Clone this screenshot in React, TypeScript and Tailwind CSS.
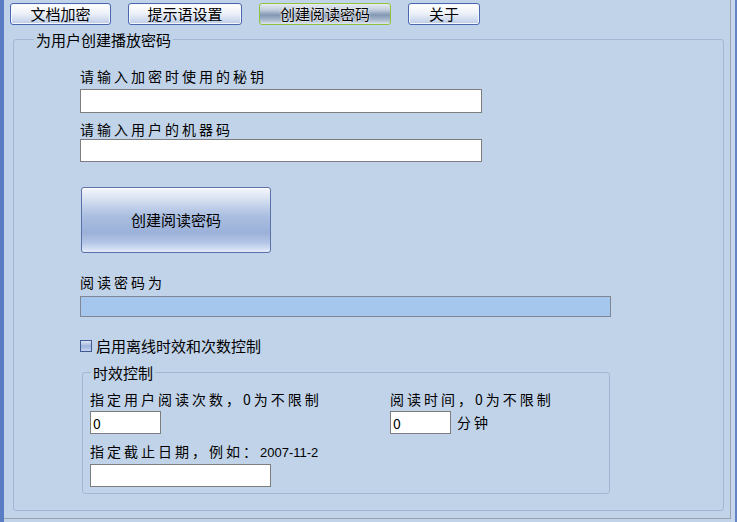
import React from "react";

const cjk = "font-['Noto_Sans_CJK_SC','Noto_Sans',sans-serif]";

type TabProps = {
  label: string;
  className: string;
  active?: boolean;
};

const TabButton = ({ label, className, active }: TabProps) => {
  return (
    <button
      className={
        active
          ? `h-[22px] rounded-[3px] border border-[#8fc33f] bg-[linear-gradient(#e6ecf2,#c2cddc_30%,#8397b3_55%,#a9b8cc_80%,#dfe7f0)] text-[15px] leading-[20px] text-black [text-shadow:0_0_2px_#fff,0_0_2px_#fff] ${className}`
          : `h-[22px] rounded-[3px] border border-[#4a66b0] bg-[linear-gradient(#ffffff,#eef2f9_45%,#cfdaee_80%,#bccbe6)] text-[15px] leading-[20px] text-black shadow-[inset_0_0_0_1px_#f4f7fc] ${className}`
      }
    >
      {label}
    </button>
  );
};

const App = () => {
  return (
    <div className={`flex h-[522px] w-[737px] overflow-hidden bg-[#c1d3e9] text-black ${cjk}`}>
      <div className="w-[4px] bg-[#5a7cc3]" />
      <div className="flex w-[727px] flex-col">
        <div className="flex h-[519px] flex-col border-r border-b border-[#9aa3ae]">
          {/* tabs */}
          <div className="flex gap-[17px] pl-[6px] pt-[3px]">
            <TabButton label="文档加密" className="w-[101px]" />
            <TabButton label="提示语设置" className="w-[114px]" />
            <TabButton label="创建阅读密码" className="w-[132px]" active />
            <TabButton label="关于" className="w-[72px]" />
          </div>

          <fieldset className="mb-[7px] ml-[9px] mt-[6px] w-[711px] flex-1 rounded-[3px] border border-[#a3b6d4]">
            <legend className="ml-[20px] px-[2px] text-[15px] leading-[17px]">为用户创建播放密码</legend>

            <div className="flex flex-col pl-[66px]">
              <label className="mt-[20px] text-[14px] leading-[17px] tracking-[3px]">请输入加密时使用的秘钥</label>
              <input className="mt-[4px] h-[24px] w-[402px] border border-[#7d7d7d] bg-white px-[2px] text-[14px] outline-none" />

              <label className="mt-[8px] text-[14px] leading-[17px] tracking-[3px]">请输入用户的机器码</label>
              <input className="mt-[1px] h-[23px] w-[402px] border border-[#7d7d7d] bg-white px-[2px] text-[14px] outline-none" />

              <button className="ml-[1px] mt-[25px] h-[66px] w-[190px] rounded-[3px] border border-[#5c70a9] bg-[linear-gradient(#f4f7fc,#dbe4f3_15%,#c0cfe9_30%,#a9bde0_45%,#9cb1d9_70%,#b3c5e6_85%,#e2ebf9)] text-[15px] leading-[20px] shadow-[inset_0_1px_0_#ffffff,inset_0_-2px_0_#dfe8f8]">
                创建阅读密码
              </button>

              <label className="mt-[21px] text-[14px] leading-[17px] tracking-[3px]">阅读密码为</label>
              <input
                readOnly
                className="mt-[5px] h-[21px] w-[531px] border border-[#7f8794] bg-[#a5c7ee] px-[2px] text-[14px] outline-none"
              />

              <label className="mt-[20px] flex h-[17px] items-center gap-[4px] text-[15px] leading-[17px]">
                <span className="h-[12px] w-[12px] border border-[#3f5a92] bg-[linear-gradient(#dfe7f5,#9fb4dc_50%,#c5d4ee)]" />
                启用离线时效和次数控制
              </label>

              <fieldset className="ml-[2px] mt-[10px] w-[528px] rounded-[3px] border border-[#a3b6d4] pb-[6px]">
                <legend className="ml-[8px] px-[2px] text-[15px] leading-[17px]">时效控制</legend>

                <div className="grid grid-cols-[300px_1fr] pl-[7px]">
                  <div className="flex flex-col">
                    <label className="mt-[10px] text-[14px] leading-[17px] tracking-[3px]">
                      指定用户阅读次数，0为不限制
                    </label>
                    <input
                      defaultValue="0"
                      className="mt-[3px] h-[23px] w-[71px] border border-[#7d7d7d] bg-white px-[2px] text-[14px] outline-none"
                    />
                    <label className="mt-[9px] text-[14px] leading-[17px] tracking-[3px]">
                      指定截止日期，例如：<span className="font-['Liberation_Sans',sans-serif] text-[13px] tracking-normal">2007-11-2</span>
                    </label>
                    <input className="mt-[3px] h-[23px] w-[181px] border border-[#7d7d7d] bg-white px-[2px] text-[14px] outline-none" />
                  </div>
                  <div className="flex flex-col">
                    <label className="mt-[10px] text-[14px] leading-[17px] tracking-[3px]">阅读时间，0为不限制</label>
                    <div className="mt-[3px] flex items-center gap-[6px]">
                      <input
                        defaultValue="0"
                        className="h-[23px] w-[61px] border border-[#7d7d7d] bg-white px-[2px] text-[14px] outline-none"
                      />
                      <span className="text-[14px] leading-[17px] tracking-[3px]">分钟</span>
                    </div>
                  </div>
                </div>
              </fieldset>
            </div>
          </fieldset>
        </div>
      </div>
      <div className="w-[4px] bg-[#c6d6ec]" />
      <div className="w-[2px] bg-[#6584c4]" />
    </div>
  );
};

export default App;
